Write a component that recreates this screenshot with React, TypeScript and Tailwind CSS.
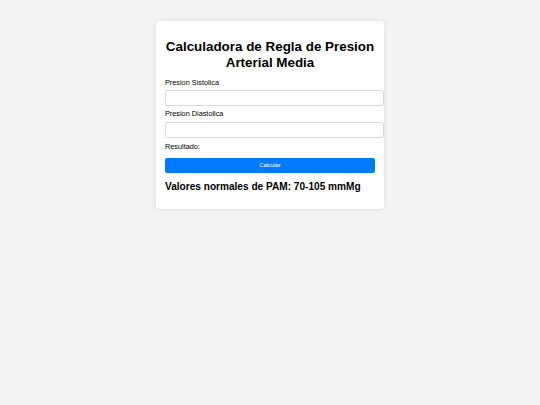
export default function App() {
  return (
    <div
      className="min-h-[405px] w-full bg-[#f4f4f4] pt-[21px]"
      style={{ fontFamily: '"Liberation Sans", Arial, sans-serif' }}
    >
      <div className="mx-auto w-[228px] rounded-[4px] bg-white px-[9px] pt-[9px] pb-[9px] shadow-[0_0_5px_rgba(0,0,0,0.1)]">
        <h1 className="-mx-[4px] mt-[9px] mb-[7.4px] text-center text-[13.4px] font-bold leading-[16px] text-black">
          Calculadora de Regla de Presion Arterial Media
        </h1>

        <label className="block text-[7.3px] leading-[9px] text-black">Presion Sistolica</label>
        <input
          type="number"
          className="mt-[3px] block h-[15.6px] w-[219px] rounded-[2px] border border-[#dcdcdc] bg-white outline-none"
        />

        <label className="mt-[3.5px] block text-[7.3px] leading-[9px] text-black">Presion Diastolica</label>
        <input
          type="number"
          className="mt-[3.8px] block h-[15.6px] w-[219px] rounded-[2px] border border-[#dcdcdc] bg-white outline-none"
        />

        <p className="mt-[4px] text-[7.3px] leading-[9px] text-black">Resultado:</p>

        <button
          type="button"
          className="mt-[7.3px] block h-[14.4px] w-full rounded-[2px] bg-[#007bff] text-[5.8px] leading-[14.4px] text-white"
        >
          Calcular
        </button>

        <h3 className="mt-[8.8px] mb-[7px] text-[10.1px] font-bold leading-[12px] text-black">
          Valores normales de PAM: 70-105 mmMg
        </h3>
      </div>
    </div>
  );
}
